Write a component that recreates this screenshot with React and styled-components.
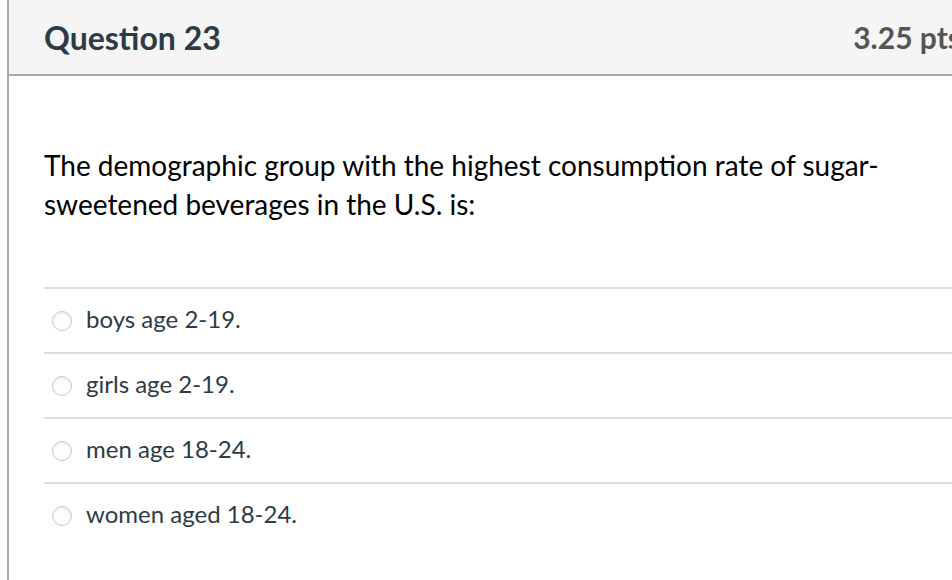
import styled, { createGlobalStyle } from 'styled-components';

const GlobalStyle = createGlobalStyle`
  html, body {
    margin: 0;
    padding: 0;
    background: #fff;
    overflow: hidden;
  }
  body {
    font-family: Lato, "Noto Sans", sans-serif;
  }
`;

const Page = styled.div`
  width: 952px;
  height: 580px;
  overflow: hidden;
  padding-left: 7px;
  box-sizing: border-box;
`;

const Panel = styled.div`
  width: 1010px;
  height: 600px;
  border-left: 2px solid #a8a8a8;
  box-sizing: border-box;
`;

const Header = styled.div`
  display: flex;
  align-items: center;
  justify-content: space-between;
  height: 74px;
  padding: 0 56px 0 35px;
  background: #f5f5f5;
  border-bottom: 2px solid #a8a8a8;
`;

const Title = styled.h2`
  margin: 0;
  font-size: 32px;
  font-weight: 700;
  color: #2d3b45;
`;

const Points = styled.div`
  font-size: 30px;
  font-weight: 700;
  color: #555;
`;

const Body = styled.div`
  padding: 70px 0 0 35px;
`;

const QuestionText = styled.p`
  margin: 0 0 63px;
  font-size: 28px;
  line-height: 39px;
  color: #000;
  width: 860px;
`;

const Answer = styled.label`
  display: flex;
  align-items: center;
  gap: 14px;
  height: 63px;
  box-sizing: content-box;
  padding: 0 0 0 8px;
  border-top: 2px solid #dcdcdc;
  font-size: 24px;
  color: #2d3b45;
  & > span:last-child {
    margin-bottom: 4px;
  }
`;

const Radio = styled.span`
  width: 18px;
  height: 18px;
  border-radius: 50%;
  border: 1px solid #c8c8c8;
  background: linear-gradient(#fafafa, #fff);
  box-shadow: inset 0 1px 2px rgba(0, 0, 0, 0.08);
  flex-shrink: 0;
`;

const answers = ['boys age 2-19.', 'girls age 2-19.', 'men age 18-24.', 'women aged 18-24.'];

export default function App() {
  return (
    <Page>
      <GlobalStyle />
      <Panel>
        <Header>
          <Title>Question 23</Title>
          <Points>3.25 pts</Points>
        </Header>
        <Body>
          <QuestionText>
            The demographic group with the highest consumption rate of sugar-sweetened beverages in the U.S. is:
          </QuestionText>
          {answers.map((a) => (
            <Answer key={a}>
              <Radio />
              <span>{a}</span>
            </Answer>
          ))}
        </Body>
      </Panel>
    </Page>
  );
}
